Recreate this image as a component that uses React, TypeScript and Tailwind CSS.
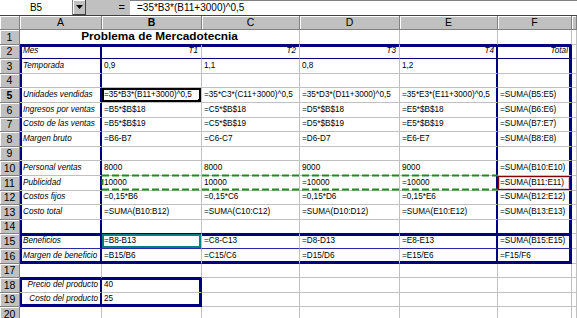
import React from "react";

type Cell = { t?: string; a?: "l" | "r" | "c"; i?: boolean };

const L = (t: string): Cell => ({ t, i: true });
const V = (t: string): Cell => ({ t });
const RI = (t: string): Cell => ({ t, a: "r", i: true });
const E: Cell = {};

const colW = ["w-[20px]", "w-[82px]", "w-[100px]", "w-[98px]", "w-[100px]", "w-[98px]", "w-[74px]", "w-[5px]"];
const letters = ["A", "B", "C", "D", "E", "F", ""];

const heights = [15, 14, 15, 14, 15, 15, 14, 15, 14, 15, 15, 14, 15, 14, 15, 15, 14, 15, 14, 15];

const data: Record<number, Cell[]> = {
  2: [L("Mes"), RI("T1"), RI("T2"), RI("T3"), RI("T4"), RI("Total")],
  3: [L("Temporada"), V("0,9"), V("1,1"), V("0,8"), V("1,2"), E],
  5: [L("Unidades vendidas"), V("=35*B3*(B11+3000)^0,5"), V("=35*C3*(C11+3000)^0,5"), V("=35*D3*(D11+3000)^0,5"), V("=35*E3*(E11+3000)^0,5"), V("=SUMA(B5:E5)")],
  6: [L("Ingresos por ventas"), V("=B5*$B$18"), V("=C5*$B$18"), V("=D5*$B$18"), V("=E5*$B$18"), V("=SUMA(B6:E6)")],
  7: [L("Costo de las ventas"), V("=B5*$B$19"), V("=C5*$B$19"), V("=D5*$B$19"), V("=E5*$B$19"), V("=SUMA(B7:E7)")],
  8: [L("Margen bruto"), V("=B6-B7"), V("=C6-C7"), V("=D6-D7"), V("=E6-E7"), V("=SUMA(B8:E8)")],
  10: [L("Personal ventas"), V("8000"), V("8000"), V("9000"), V("9000"), V("=SUMA(B10:E10)")],
  11: [L("Publicidad"), V("10000"), V("10000"), V("=10000"), V("=10000"), V("=SUMA(B11:E11)")],
  12: [L("Costos fijos"), V("=0,15*B6"), V("=0,15*C6"), V("=0,15*D6"), V("=0,15*E6"), V("=SUMA(B12:E12)")],
  13: [L("Costo total"), V("=SUMA(B10:B12)"), V("=SUMA(C10:C12)"), V("=SUMA(D10:D12)"), V("=SUMA(E10:E12)"), V("=SUMA(B13:E13)")],
  15: [L("Beneficios"), V("=B8-B13"), V("=C8-C13"), V("=D8-D13"), V("=E8-E13"), V("=SUMA(B15:E15)")],
  16: [L("Margen de beneficio"), V("=B15/B6"), V("=C15/C6"), V("=D15/D6"), V("=E15/E6"), V("=F15/F6")],
  18: [RI("Precio del producto"), V("40"), E, E, E, E],
  19: [RI("Costo del producto"), V("25"), E, E, E, E],
};

function SheetCell({ r, c, cell }: { r: number; c: number; cell: Cell }) {
  const inRegion = r >= 2 && r <= 16 && c <= 6;
  const inBox = (r === 18 || r === 19) && c <= 2;
  const rightNavy = (inRegion && (c === 1 || c === 5 || c === 6)) || (inBox && (c === 1 || c === 2));
  const bottomNavy = ((r === 1 || r === 2 || r === 14 || r === 16) && c <= 6) || ((r === 17 || r === 19) && c <= 2);
  const bottomBlue = r === 15 && c <= 6;
  const topThick = ((r === 2 || r === 15) && c <= 6) || (r === 18 && c <= 2);
  const bottomThick = (r === 16 && c <= 6) || (r === 19 && c <= 2);
  const leftThick = c === 1 && (inRegion || inBox);
  const rightThick = (c === 6 && inRegion) || (c === 2 && inBox);
  const rightThin = (inRegion && (c === 1 || c === 5)) || (inBox && c === 1);

  const align =
    cell.a === "r" ? "justify-end pr-[3px]" : cell.a === "c" ? "justify-center" : c === 1 ? "pl-[3px]" : "pl-[2px]";

  return (
    <div
      className={`relative ${colW[c]} h-full shrink-0 flex items-center overflow-hidden border-r border-b ${
        rightNavy ? "border-r-[#000080]" : "border-r-[#c0c0c0]"
      } ${bottomNavy ? "border-b-[#000080]" : bottomBlue ? "border-b-[#2a2aa0]" : "border-b-[#c0c0c0]"} ${align}`}
    >
      {cell.t && (
        <span className={`whitespace-nowrap leading-none text-[8.2px] text-black ${cell.i ? "italic" : ""}`}>
          {cell.t}
        </span>
      )}
      {topThick && <span className="absolute left-0 right-0 top-0 h-[2px] bg-[#000080]" />}
      {bottomThick && <span className="absolute left-0 right-0 bottom-0 h-[2px] bg-[#000080]" />}
      {leftThick && <span className="absolute left-0 top-0 bottom-0 w-[2px] bg-[#000080]" />}
      {rightThick && <span className="absolute right-0 top-0 bottom-0 w-[2px] bg-[#000080]" />}
      {rightThin && <span className="absolute right-0 top-0 bottom-0 w-[1px] bg-[#000080]" />}
      {r === 5 && c === 2 && (
        <>
          <span className="absolute left-0 top-0 right-0 bottom-0 border-2 border-black" />
          <span className="absolute right-[-2px] bottom-[-2px] w-[5px] h-[5px] bg-black" />
        </>
      )}
      {r === 15 && c === 2 && <span className="absolute left-0 top-0 right-0 bottom-0 border-2 border-[#008080]" />}
      {r === 11 && c === 6 && (
        <span className="absolute left-0 top-0 right-[1px] bottom-0 border border-[#800000] shadow-[inset_0_0_0_1px_#e8c8c8]" />
      )}
    </div>
  );
}

function RowHeader({ n, bold }: { n: number; bold?: boolean }) {
  return (
    <div
      className={`w-[20px] h-full shrink-0 flex items-center justify-center bg-[#c0c0c0] border-r border-b border-[#808080] shadow-[inset_1px_1px_0_#ffffff] text-[10.5px] leading-none text-black ${
        bold ? "font-bold" : ""
      }`}
    >
      {n}
    </div>
  );
}

export default function App() {
  return (
    <div className="w-[577px] h-[318px] overflow-hidden bg-white font-['Liberation_Sans',Arial,sans-serif] select-none">
      {/* Formula bar */}
      <div className="flex h-[16px] bg-[#c0c0c0] border-b border-[#404040]">
        <div className="w-[73px] h-full bg-white flex items-center justify-center text-[10px] leading-none text-black border-r border-[#808080]">
          B5
        </div>
        <div className="w-[13px] h-full flex items-center justify-center bg-[#c0c0c0] border-r border-b border-[#404040] shadow-[inset_1px_1px_0_#ffffff]">
          <svg width="7" height="4" viewBox="0 0 7 4">
            <path d="M0 0h7L3.5 4z" fill="#000" />
          </svg>
        </div>
        <div className="w-[44px] h-full flex items-center justify-end pr-[5px] text-[11px] leading-none text-black">=</div>
        <div className="flex-1 h-full bg-white flex items-center pl-[7px] text-[10px] leading-none text-black border-t border-[#808080]">
          =35*B3*(B11+3000)^0,5
        </div>
      </div>

      <div className="relative">
        {/* Column headers */}
        <div className="flex h-[14px]">
          <div className="w-[20px] h-full shrink-0 bg-[#c0c0c0] border-r border-b border-[#808080] shadow-[inset_1px_1px_0_#ffffff]" />
          {letters.map((l, i) => (
            <div
              key={i}
              className={`${colW[i + 1]} h-full shrink-0 flex items-center justify-center bg-[#c0c0c0] border-r border-b border-[#808080] shadow-[inset_1px_1px_0_#ffffff] text-[10.5px] leading-none text-black ${
                l === "B" ? "font-bold" : ""
              }`}
            >
              {l}
            </div>
          ))}
        </div>

        {/* Rows */}
        {heights.map((h, idx) => {
          const r = idx + 1;
          const cells = data[r] || [E, E, E, E, E, E];
          return (
            <div key={r} className={`flex ${h === 15 ? "h-[15px]" : "h-[14px]"}`}>
              <RowHeader n={r} bold={r === 5} />
              {r === 1 ? (
                <>
                  <div className="relative w-[280px] h-full shrink-0 flex items-center justify-center border-r border-b border-r-[#c0c0c0] border-b-[#000080]">
                    <span className="whitespace-nowrap leading-none text-[11.8px] font-bold text-black">
                      Problema de Mercadotecnia
                    </span>
                  </div>
                  <SheetCell r={1} c={4} cell={E} />
                  <SheetCell r={1} c={5} cell={E} />
                  <SheetCell r={1} c={6} cell={E} />
                  <SheetCell r={1} c={7} cell={E} />
                </>
              ) : (
                <>
                  {cells.map((cell, ci) => (
                    <SheetCell key={ci} r={r} c={ci + 1} cell={cell} />
                  ))}
                  <SheetCell r={r} c={7} cell={E} />
                </>
              )}
            </div>
          );
        })}

        {/* Copy marquee around B11:E11 */}
        <svg className="absolute left-[101px] top-[158px] pointer-events-none" width="400" height="18" viewBox="0 0 400 18">
          <line x1="1" y1="1.5" x2="397" y2="1.5" stroke="#1f8a1f" strokeWidth="2" strokeDasharray="7 3" />
          <line x1="1" y1="15.5" x2="397" y2="15.5" stroke="#1f8a1f" strokeWidth="2" strokeDasharray="7 3" />
          <line x1="1.5" y1="5" x2="1.5" y2="11" stroke="#1f8a1f" strokeWidth="2" />
        </svg>
      </div>
    </div>
  );
}
